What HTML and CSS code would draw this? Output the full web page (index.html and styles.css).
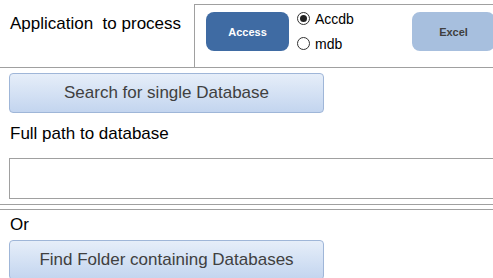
FILE: index.html
```html
<!DOCTYPE html>
<html>
<head>
    <meta charset="utf-8">
    <title>Application to process</title>
    <link rel="stylesheet" href="styles.css">
</head>
<body>
    <!-- Which application and database type to work on -->
    <div class="header">
        <div class="appLabel">Application&nbsp; to process</div>
        <div class="frame">
            <button class="appButton access">Access</button>
            <div class="radios">
                <label class="radio"><span class="dot checked"></span>Accdb</label>
                <label class="radio"><span class="dot"></span>mdb</label>
            </div>
            <button class="appButton excel">Excel</button>
        </div>
    </div>

    <button class="bigButton">Search for single Database</button>
    <div class="caption">Full path to database</div>
    <div class="pathBox"></div>
    <div class="doubleLine"></div>
    <div class="caption orText">Or</div>
    <button class="bigButton lastButton">Find Folder containing Databases</button>
</body>
</html>
```

FILE: styles.css
```css
body { margin: 0; width: 493px; height: 278px; overflow: hidden; background-color: white; font-family: "Liberation Sans", Arial, sans-serif; color: black}
.header { display: flex; height: 67px; border-bottom: 1px solid #a0a0a0}
.appLabel { width: 194px; flex-shrink: 0; padding-left: 10px; padding-top: 14px; font-size: 17px; box-sizing: border-box; white-space: nowrap}
.frame { display: flex; align-items: flex-start; margin-top: 4px; height: 55px; width: 287px; overflow: hidden; border: 1px solid #a0a0a0; border-right: none; padding-left: 11px; padding-top: 7px}
.appButton { height: 39px; width: 83px; flex-shrink: 0; border: none; border-radius: 8px; font-family: "Liberation Sans", Arial, sans-serif; font-size: 11px; font-weight: bold}
.access { background-color: #3f6ba3; color: white}
.excel { background-color: #a7bfde; color: #404040}
.radios { display: flex; flex-direction: column; gap: 12px; width: 115px; flex-shrink: 0; margin-left: 8px}
.radio { display: flex; align-items: center; font-size: 14px; height: 13px}
.dot { width: 13px; height: 13px; border: 1px solid #333; border-radius: 50%; margin-right: 5px; display: flex; align-items: center; justify-content: center; box-sizing: border-box; flex-shrink: 0}
.dot.checked::after { content: ""; width: 7px; height: 7px; border-radius: 50%; background-color: #222}
.bigButton { display: block; margin-left: 9px; margin-top: 5px; width: 315px; height: 40px; border: 1px solid #9fb6d8; border-radius: 4px; background: linear-gradient(#e6eef9, #c3d5ef); color: #404040; font-family: "Liberation Sans", Arial, sans-serif; font-size: 17px; padding: 0}
.caption { margin-left: 10px; margin-top: 11px; font-size: 17px; height: 20px; line-height: 20px}
.pathBox { margin-left: 9px; margin-top: 14px; height: 39px; border: 1px solid #a0a0a0; border-right: none}
.doubleLine { margin-top: 5px; height: 4px; border-top: 1px solid #a0a0a0; border-bottom: 1px solid #a0a0a0}
.orText { margin-top: 5px}
.lastButton { margin-top: 5px}
```
